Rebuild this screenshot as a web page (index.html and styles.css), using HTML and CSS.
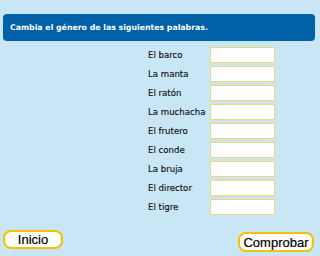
FILE: index.html
```html
<!DOCTYPE html>
<html lang="es">
<head>
<meta charset="utf-8">
<link rel="stylesheet" href="styles.css">
</head>
<body>
<div class="page">
  <div class="header">Cambia el género de las siguientes palabras.</div>
  <div class="rows">
    <div class="row"><span class="label">El barco</span><input class="field" type="text"></div>
    <div class="row"><span class="label">La manta</span><input class="field" type="text"></div>
    <div class="row"><span class="label">El ratón</span><input class="field" type="text"></div>
    <div class="row"><span class="label">La muchacha</span><input class="field" type="text"></div>
    <div class="row"><span class="label">El frutero</span><input class="field" type="text"></div>
    <div class="row"><span class="label">El conde</span><input class="field" type="text"></div>
    <div class="row"><span class="label">La bruja</span><input class="field" type="text"></div>
    <div class="row"><span class="label">El director</span><input class="field" type="text"></div>
    <div class="row"><span class="label">El tigre</span><input class="field" type="text"></div>
  </div>
  <div class="footer">
    <button class="btn btn-start">Inicio</button>
    <button class="btn btn-check">Comprobar</button>
  </div>
</div>
</body>
</html>
```
FILE: styles.css
```css
html, body {
  margin: 0;
  padding: 0;
  background: #c8e6f6;
}
.page {
  width: 320px;
  height: 256px;
  display: flex;
  flex-direction: column;
  background: #c8e6f6;
  font-family: "DejaVu Sans", Verdana, sans-serif;
}
.header {
  margin: 14px 5px 0 3px;
  height: 27px;
  box-sizing: border-box;
  background: #0060a8;
  border-radius: 4px;
  color: #ffffff;
  font-weight: bold;
  font-size: 7.8px;
  display: flex;
  align-items: center;
  padding-left: 7px;
}
.rows {
  display: flex;
  flex-direction: column;
  gap: 3px;
  padding-left: 148px;
  margin-top: 6px;
}
.row {
  display: flex;
  align-items: center;
  height: 16px;
}
.label {
  width: 62px;
  font-size: 8.6px;
  color: #111111;
  white-space: nowrap;
  -webkit-text-stroke: 0.15px #111111;
}
.field {
  box-sizing: border-box;
  width: 65px;
  height: 16px;
  margin: 0;
  padding: 0;
  border: 1.5px solid #f6d56e;
  border-radius: 1px;
  background: #ffffff;
  outline: none;
}
.footer {
  display: flex;
  justify-content: space-between;
  align-items: flex-start;
  padding: 0 6px 0 3px;
  margin-top: 15px;
}
.btn {
  font-family: "Liberation Sans", Arial, sans-serif;
  font-size: 13px;
  color: #000000;
  background: #ffffff;
  border: 2px solid #f8c000;
  border-radius: 8px;
  padding: 0;
  margin: 0;
  box-sizing: border-box;
  line-height: 1;
  -webkit-text-stroke: 0.2px #000000;
}
.btn-start {
  width: 60px;
  height: 19px;
}
.btn-check {
  width: 76px;
  height: 20px;
  margin-top: 2px;
}
```
